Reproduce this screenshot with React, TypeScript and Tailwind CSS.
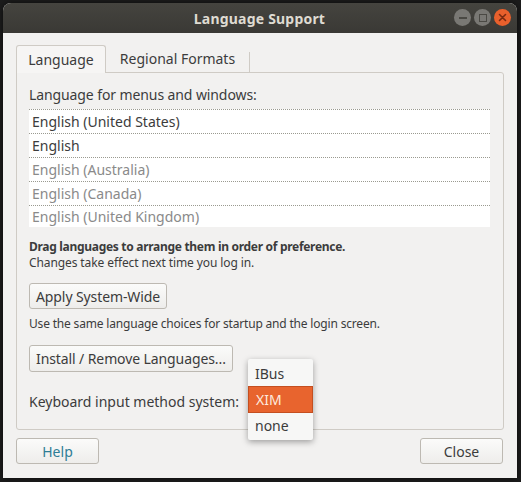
import React from "react";

const font = { fontFamily: '"Noto Sans", "Open Sans", sans-serif' };

function Row({ text, dark, last }: { text: string; dark?: boolean; last?: boolean }) {
  return (
    <div
      className={`flex items-center border-t border-dotted border-[#9a9a90] pl-[3px] ${last ? "h-[22px]" : "h-[24px]"} ${dark ? "text-[#3c3c3c]" : "text-[#8a8a8a]"}`}
    >
      {text}
    </div>
  );
}

export default function App() {
  return (
    <div className="w-[521px] h-[482px] bg-[#1c1c1c] overflow-hidden pt-[3px] pl-[3px]" style={font}>
      <div className="relative w-[514px] h-[475px] rounded-t-[8px] bg-[#f2f1f0] flex flex-col overflow-hidden shadow-[0_0_6px_rgba(0,0,0,0.6)]">
        {/* Title bar */}
        <div className="relative h-[30px] bg-gradient-to-b from-[#45443f] to-[#3a3935] flex items-center justify-center shrink-0">
          <span className="text-[#dfdbd2] font-bold text-[14px] tracking-[0.2px] ml-[-1px]">Language Support</span>
          <div className="absolute right-[6px] top-[6px] flex items-center gap-[3px]">
            <div className="w-[17px] h-[17px] rounded-full bg-[#797874] flex items-center justify-center">
              <div className="w-[8px] h-[2px] bg-[#4a4944]" />
            </div>
            <div className="w-[17px] h-[17px] rounded-full bg-[#797874] flex items-center justify-center">
              <div className="w-[8px] h-[8px] border-[1.5px] border-[#4a4944]" />
            </div>
            <div className="w-[17px] h-[17px] rounded-full bg-[#e9602c] flex items-center justify-center">
              <svg width="9" height="9" viewBox="0 0 9 9">
                <path d="M1.5 1.5 L7.5 7.5 M7.5 1.5 L1.5 7.5" stroke="#7a2a10" strokeWidth="1.6" strokeLinecap="round" />
              </svg>
            </div>
          </div>
        </div>

        {/* Body */}
        <div className="flex flex-col px-[13px] pt-[12px] text-[14px] text-[#3c3c3c]">
          {/* Tabs */}
          <div className="flex items-end h-[27px]">
            <div className="relative w-[90px] h-[28px] mb-[-1px] z-10 rounded-t-[3px] border border-b-0 border-[#cfcbc5] bg-[#f6f5f4] flex items-center justify-center pb-[1px]">
              Language
            </div>
            <div className="w-[144px] h-[20px] border-r border-[#cfcbc5] flex items-center justify-center pb-[4px]">
              <span className="mt-[-3px]">Regional Formats</span>
            </div>
          </div>

          {/* Panel */}
          <div className="relative h-[358px] border border-[#cfcbc5] rounded-b-[3px] rounded-tr-[3px] bg-[#f2f1f0] px-[12px] pt-[12px]">
            <div className="h-[20px] leading-[20px] tracking-[-0.1px]">Language for menus and windows:</div>
            <div className="mt-[4px] bg-white w-[461px] leading-none">
              <Row text="English (United States)" dark />
              <Row text="English" dark />
              <Row text="English (Australia)" />
              <Row text="English (Canada)" />
              <Row text="English (United Kingdom)" last />
            </div>
            <div className="mt-[12px] text-[12px] leading-[16px] font-bold tracking-[-0.3px]">
              Drag languages to arrange them in order of preference.
            </div>
            <div className="text-[12px] leading-[16px] tracking-[-0.1px]">Changes take effect next time you log in.</div>
            <button className="mt-[12px] h-[26px] px-[6px] rounded-[3px] border border-[#bdb9b2] bg-gradient-to-b from-[#fbfbfa] to-[#eeedeb] text-[14px] text-[#3c3c3c] tracking-[-0.1px]">
              Apply System-Wide
            </button>
            <div className="mt-[7px] text-[12px] leading-[16px] tracking-[-0.18px]">
              Use the same language choices for startup and the login screen.
            </div>
            <button className="mt-[13px] h-[27px] px-[6px] rounded-[3px] border border-[#bdb9b2] bg-gradient-to-b from-[#fbfbfa] to-[#eeedeb] text-[14px] text-[#3c3c3c] tracking-[-0.1px]">
              Install / Remove Languages...
            </button>
            <div className="mt-[20px] h-[20px] leading-[20px]">Keyboard input method system:</div>

            {/* Dropdown popup */}
            <div className="absolute left-[231px] top-[286px] w-[65px] h-[81px] bg-[#f7f7f6] rounded-[2px] shadow-[0_2px_6px_rgba(0,0,0,0.35)] flex flex-col py-[2px]">
              <div className="h-[25px] flex items-center pl-[7px]">IBus</div>
              <div className="h-[27px] flex items-center pl-[7px] bg-[#e8642e] border border-[#c44f20] text-[#fde9df]">
                XIM
              </div>
              <div className="h-[25px] flex items-center pl-[7px]">none</div>
            </div>
          </div>

          {/* Bottom buttons */}
          <div className="flex justify-between mt-[8px] pr-[1px]">
            <button className="w-[83px] h-[26px] rounded-[3px] border border-[#bdb9b2] bg-gradient-to-b from-[#fbfbfa] to-[#eeedeb] text-[14px] text-[#2e7d96]">
              Help
            </button>
            <button className="w-[83px] h-[26px] rounded-[3px] border border-[#bdb9b2] bg-gradient-to-b from-[#fbfbfa] to-[#eeedeb] text-[14px] text-[#3c3c3c]">
              Close
            </button>
          </div>
        </div>
      </div>
    </div>
  );
}
